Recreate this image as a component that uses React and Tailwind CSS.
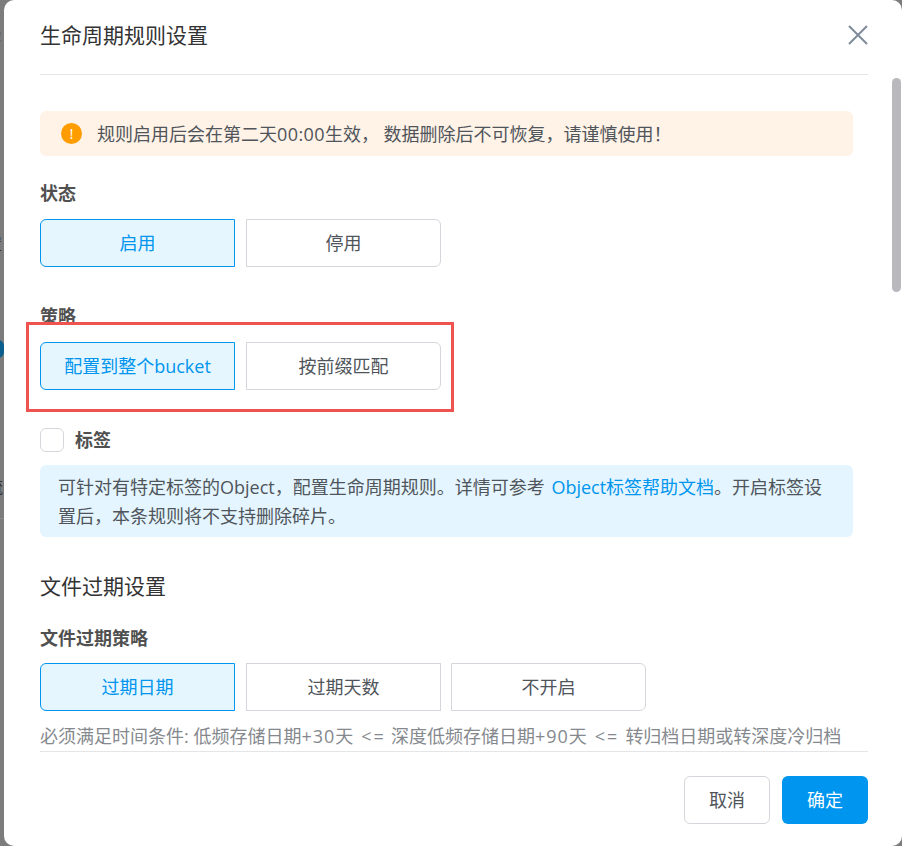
import React from "react";

const font = { fontFamily: '"Open Sans", "Noto Sans CJK SC", "Liberation Sans", sans-serif' };

function Seg({ items }) {
  return (
    <div className="flex">
      {items.map((t, i) => {
        const first = i === 0;
        const last = i === items.length - 1;
        return (
          <div
            key={t}
            className={
              "w-[195px] h-[48px] pt-[1px] flex items-center justify-center border text-[18px] " +
              (first ? "rounded-l-[6px] border-[#0095ee] bg-[#e5f6ff] text-[#0095ee] " : "border-[#d3d6da] bg-white text-[#50555b] ") +
              (i === 1 ? "ml-[11px] " : "") +
              (i === 2 ? "ml-[10px] " : "") +
              (last ? "rounded-r-[6px]" : "")
            }
          >
            {t}
          </div>
        );
      })}
    </div>
  );
}

function Label({ children, className = "" }) {
  return <div className={"text-[18px] leading-[26px] font-bold text-[#505050] " + className}>{children}</div>;
}

export default function App() {
  return (
    <div className="relative w-[902px] h-[846px] overflow-hidden bg-[#7c7c7c]" style={font}>
      <div className="absolute left-[-14px] top-[28px] text-[16px] leading-[20px] text-[#666]">容</div>
      <div className="absolute left-[-14px] top-[234px] text-[16px] leading-[20px] text-[#333]">置</div>
      <div className="absolute left-[-8px] top-[340px] w-[12px] h-[18px] rounded-full bg-[#0b5f8f]"></div>
      <div className="absolute left-[-13px] top-[477px] text-[16px] leading-[20px] text-[#333]">流</div>
      <div className="absolute left-0 top-[518px] w-[4px] h-[1px] bg-[#8c8c8c]"></div>
      <div className="ml-[4px] h-[846px] rounded-[10px] bg-white pl-[36px] pr-[34px] flex flex-col relative z-10">
        <div className="h-[75px] shrink-0 border-b border-[#e4e5e7] flex items-start justify-between">
          <div className="mt-[19px] text-[21px] leading-[32px] text-[#333]">生命周期规则设置</div>
          <svg className="mt-[25px]" width="20" height="20" viewBox="0 0 20 20" fill="none" stroke="#7f8b98" strokeWidth="2">
            <path d="M1 1 L19 19 M19 1 L1 19" />
          </svg>
        </div>
        <div className="h-[676px] shrink-0 overflow-hidden pt-[36px] pr-[15px]">
          <div className="h-[45px] rounded-[6px] bg-[#fff2e6] flex items-center pl-[21px] text-[18px] text-[#50555b]">
            <span className="w-[21px] h-[21px] rounded-full bg-[#ff9d00] text-white text-[15px] leading-[21px] text-center shrink-0">!</span>
            <span className="ml-[15px] pt-[1px] whitespace-nowrap">规则启用后会在第二天<span className="tracking-[0.4px]">00:00</span>生效， 数据删除后不可恢复，请谨慎使用！</span>
          </div>
          <Label className="mt-[24px] mb-[13px]">状态</Label>
          <Seg items={["启用", "停用"]} />
          <Label className="mt-[36px] mb-[13px]">策略</Label>
          <Seg items={["配置到整个bucket", "按前缀匹配"]} />
          <div className="mt-[37px] flex items-center">
            <span className="w-[24px] h-[24px] rounded-[6px] border border-[#d3d6da] bg-white"></span>
            <Label className="ml-[11px]">标签</Label>
          </div>
          <div className="mt-[12px] h-[72px] rounded-[6px] bg-[#e4f5ff] pl-[18px] pr-[12px] pt-[8px] text-[18px] leading-[29px] text-[#50555b]">
            可针对有特定标签的Object，配置生命周期规则。详情可参考 <span className="ml-[2px] text-[#0095ee]">Object标签帮助文档</span>。开启标签设<br />置后，本条规则将不支持删除碎片。
          </div>
          <div className="mt-[33px] text-[21px] leading-[32px] text-[#333]">文件过期设置</div>
          <Label className="mt-[23px] mb-[12px]">文件过期策略</Label>
          <Seg items={["过期日期", "过期天数", "不开启"]} />
          <div className="mt-[12px] text-[18px] leading-[26px] text-[#85898e] whitespace-nowrap">
            必须满足时间条件: 低频存储日期<span className="tracking-[1px]">+30</span>天<span className="ml-[8px] mr-[5px] tracking-[2px]">{"<="}</span>深度低频存储日期<span className="tracking-[1px]">+90</span>天<span className="ml-[8px] mr-[6px] tracking-[2px]">{"<="}</span>转归档日期或转深度冷归档
          </div>
        </div>
        <div className="border-t border-[#e4e5e7] pt-[24px] flex justify-end gap-[12px]">
          <div className="w-[86px] h-[48px] rounded-[6px] border border-[#d3d6da] bg-white flex items-center justify-center text-[18px] text-[#50555b]">取消</div>
          <div className="w-[86px] h-[48px] rounded-[6px] bg-[#0095ee] flex items-center justify-center text-[18px] text-white">确定</div>
        </div>
        <div className="absolute left-[888px] top-[78px] w-[9px] h-[214px] rounded-[5px] bg-[#b8b8bd]"></div>
        <div className="absolute left-[22px] top-[322px] w-[428px] h-[90px] border-[3px] border-[#ef5350]"></div>
      </div>
    </div>
  );
}
